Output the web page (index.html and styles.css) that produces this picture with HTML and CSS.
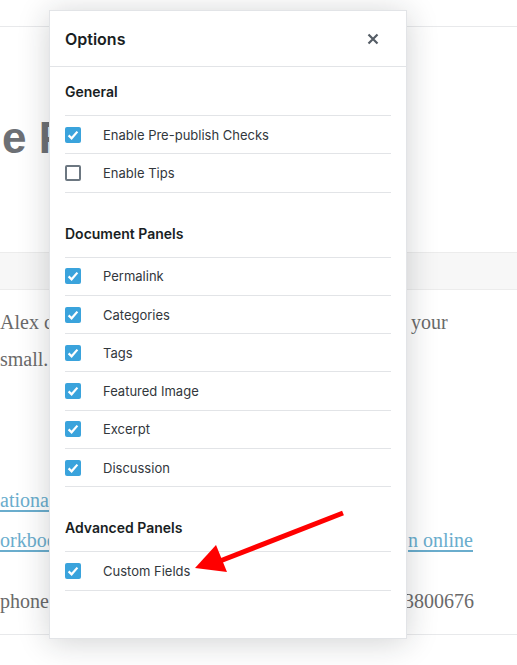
FILE: index.html
```html
<!DOCTYPE html>
<html lang="en">
<head>
<meta charset="utf-8">
<title>Options</title>
<link rel="stylesheet" href="styles.css">
</head>
<body>
<div class="page">
  <div class="topbar"></div>
  <h1 class="title">e Practice Page</h1>
  <div class="band"></div>
  <div class="para">
    <div class="line"><span class="l">Alex can help</span><span class="r r-your">your</span></div>
    <div class="line"><span class="l">small.</span></div>
  </div>
  <div class="links">
    <div class="line"><span class="l"><a href="#">ational</a></span></div>
    <div class="line"><span class="l"><a href="#">orkbook</a></span><span class="r r-online"><a href="#">n online</a></span></div>
  </div>
  <div class="phone">
    <div class="line"><span class="l">phone:</span><span class="r r-phone">3800676</span></div>
  </div>

  <div class="modal" role="dialog" aria-label="Options">
    <div class="modal-header">
      <h2 class="modal-title">Options</h2>
      <button class="close" aria-label="Close">
        <svg width="12" height="12" viewBox="0 0 12 12"><path d="M1.5 1.5 L10.5 10.5 M10.5 1.5 L1.5 10.5" stroke="#555d66" stroke-width="2.2" fill="none"/></svg>
      </button>
    </div>
    <div class="modal-body">
      <section class="section first">
        <h3 class="section-title">General</h3>
        <ul class="rows">
          <li class="row"><span class="cb on"><svg viewBox="0 0 16 16"><path d="M3.6 8.4 L6.6 11.3 L12.4 4.6" stroke="#fff" stroke-width="2.2" fill="none"/></svg></span><span class="label">Enable Pre-publish Checks</span></li>
          <li class="row"><span class="cb"></span><span class="label">Enable Tips</span></li>
        </ul>
      </section>
      <section class="section">
        <h3 class="section-title">Document Panels</h3>
        <ul class="rows">
          <li class="row"><span class="cb on"><svg viewBox="0 0 16 16"><path d="M3.6 8.4 L6.6 11.3 L12.4 4.6" stroke="#fff" stroke-width="2.2" fill="none"/></svg></span><span class="label">Permalink</span></li>
          <li class="row"><span class="cb on"><svg viewBox="0 0 16 16"><path d="M3.6 8.4 L6.6 11.3 L12.4 4.6" stroke="#fff" stroke-width="2.2" fill="none"/></svg></span><span class="label">Categories</span></li>
          <li class="row"><span class="cb on"><svg viewBox="0 0 16 16"><path d="M3.6 8.4 L6.6 11.3 L12.4 4.6" stroke="#fff" stroke-width="2.2" fill="none"/></svg></span><span class="label">Tags</span></li>
          <li class="row"><span class="cb on"><svg viewBox="0 0 16 16"><path d="M3.6 8.4 L6.6 11.3 L12.4 4.6" stroke="#fff" stroke-width="2.2" fill="none"/></svg></span><span class="label">Featured Image</span></li>
          <li class="row"><span class="cb on"><svg viewBox="0 0 16 16"><path d="M3.6 8.4 L6.6 11.3 L12.4 4.6" stroke="#fff" stroke-width="2.2" fill="none"/></svg></span><span class="label">Excerpt</span></li>
          <li class="row"><span class="cb on"><svg viewBox="0 0 16 16"><path d="M3.6 8.4 L6.6 11.3 L12.4 4.6" stroke="#fff" stroke-width="2.2" fill="none"/></svg></span><span class="label">Discussion</span></li>
        </ul>
      </section>
      <section class="section">
        <h3 class="section-title">Advanced Panels</h3>
        <ul class="rows">
          <li class="row"><span class="cb on"><svg viewBox="0 0 16 16"><path d="M3.6 8.4 L6.6 11.3 L12.4 4.6" stroke="#fff" stroke-width="2.2" fill="none"/></svg></span><span class="label">Custom Fields</span></li>
        </ul>
      </section>
    </div>
  </div>

  <svg class="arrow" width="517" height="665" viewBox="0 0 517 665">
    <line x1="343" y1="513" x2="220" y2="561" stroke="#ff0000" stroke-width="5"/>
    <polygon points="195,568 216,545 227,572" fill="#ff0000"/>
  </svg>
</div>
</body>
</html>
```
FILE: styles.css
```css
html, body {
  margin: 0;
  padding: 0;
  background: #fff;
}
body {
  width: 517px;
  height: 665px;
  overflow: hidden;
}
.page {
  position: relative;
  width: 517px;
  height: 665px;
  overflow: hidden;
}
.topbar {
  height: 26px;
  border-bottom: 1px solid #e8e9eb;
}
.title {
  margin: 85px 0 0 0;
  padding-left: 2px;
  width: 47px;
  overflow: hidden;
  font-family: "Liberation Sans", Arial, sans-serif;
  font-weight: 700;
  font-size: 44px;
  line-height: 52px;
  color: #6d7075;
  white-space: nowrap;
}
.band {
  margin-top: 88px;
  height: 36px;
  background: #f7f7f7;
  border-top: 1px solid #ececec;
  border-bottom: 1px solid #ececec;
}
.para, .links, .phone {
  font-family: "Liberation Serif", "Times New Roman", serif;
  font-size: 20px;
  color: #6a6a6a;
}
.para {
  margin-top: 14px;
  line-height: 37px;
}
.links {
  margin-top: 102px;
  line-height: 40px;
}
.phone {
  margin-top: 21px;
  line-height: 40px;
  padding-bottom: 13px;
  border-bottom: 1px solid #e8e9eb;
}
.line {
  display: flex;
  white-space: nowrap;
}
.l {
  width: 49px;
  overflow: hidden;
  flex: none;
}
.r-your { padding-left: 362px; }
.r-online { padding-left: 359px; }
.r-phone { padding-left: 355px; }
.links a {
  color: #6aadcd;
  text-decoration: underline;
  text-underline-offset: 3px;
}

/* modal */
.modal {
  position: absolute;
  left: 49px;
  top: 10px;
  width: 358px;
  height: 629px;
  box-sizing: border-box;
  background: #fff;
  border: 1px solid #e2e4e7;
  box-shadow: 0 3px 30px rgba(25, 30, 35, 0.2);
  font-family: Inter, "Noto Sans", sans-serif;
}
.modal-header {
  height: 55px;
  border-bottom: 1px solid #e2e4e7;
  display: flex;
  align-items: center;
  justify-content: space-between;
  padding: 0 15px;
}
.modal-title {
  margin: 0;
  font-size: 16px;
  font-weight: 600;
  color: #191e23;
}
.close {
  width: 36px;
  height: 36px;
  border: 0;
  background: none;
  padding: 0;
  display: flex;
  align-items: center;
  justify-content: center;
}
.modal-body {
  padding: 0 15px;
}
.section {
  margin-top: 31px;
}
.section.first {
  margin-top: 15px;
}
.section-title {
  margin: 0 0 13px 0;
  font-size: 14px;
  line-height: 20px;
  font-weight: 600;
  color: #191e23;
}
.rows {
  list-style: none;
  margin: 0;
  padding: 0;
  border-bottom: 1px solid #e2e4e7;
}
.row {
  height: 37.3px;
  border-top: 1px solid #e2e4e7;
  display: flex;
  align-items: center;
}
.cb {
  width: 16px;
  height: 16px;
  box-sizing: border-box;
  border: 2px solid #6c7781;
  border-radius: 2px;
  flex: none;
  display: flex;
}
.cb.on {
  background: #3aa3dc;
  border: 0;
}
.cb svg {
  width: 16px;
  height: 16px;
}
.label {
  margin-left: 22px;
  font-size: 13px;
  color: #32373c;
}
.arrow {
  position: absolute;
  left: 0;
  top: 0;
  pointer-events: none;
}
```
